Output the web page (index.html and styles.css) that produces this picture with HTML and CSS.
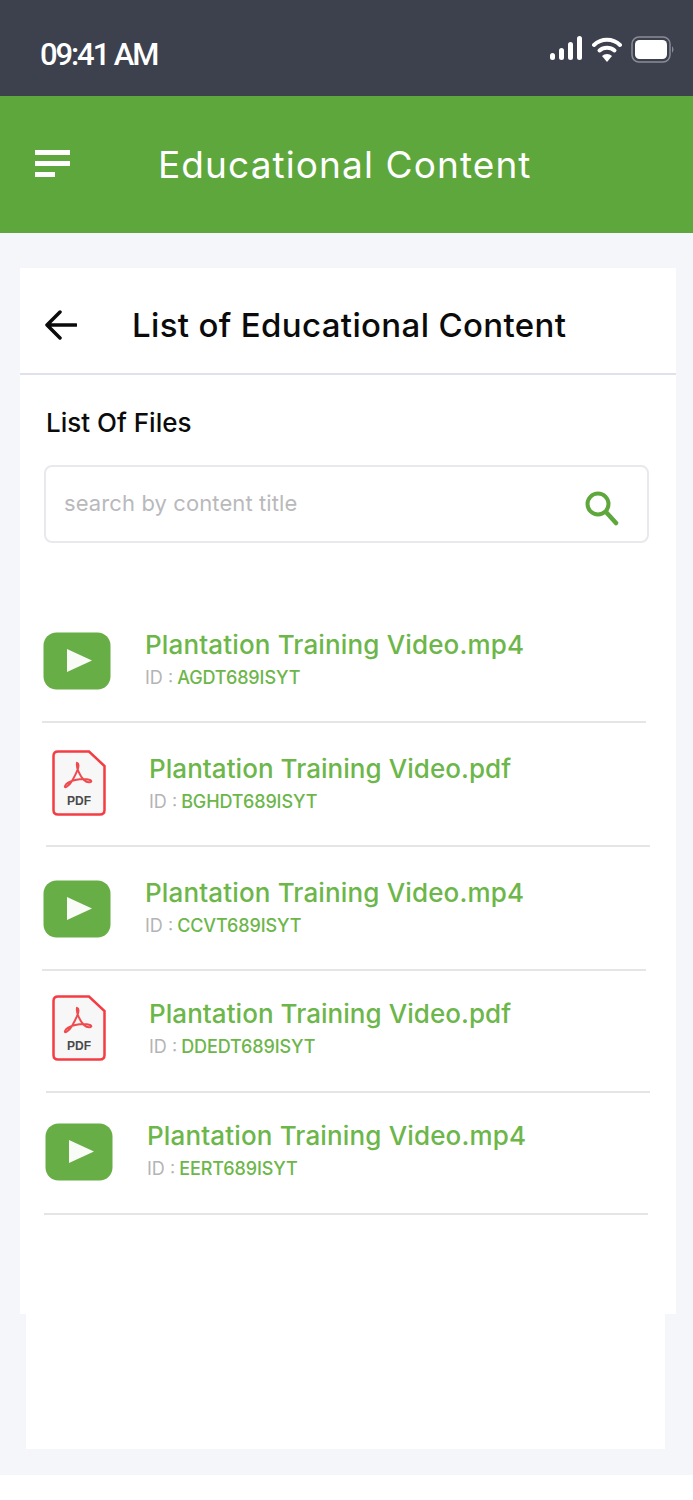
FILE: index.html
```html
<!DOCTYPE html>
<html>
  <head>
    <title>Educational Content</title>
    <link rel="stylesheet" href="styles.css">
  </head>
  <body>
    <div class="page">
      <div class="status-bar">
        <span class="status-time">09:41 AM</span>
        <div class="status-icons">
          <svg width="33" height="24" viewBox="0 0 33 24">
            <rect x="0" y="17" width="5" height="7" rx="2.5" fill="#fff"/>
            <rect x="9" y="12" width="5" height="12" rx="2.5" fill="#fff"/>
            <rect x="18" y="6" width="5" height="18" rx="2.5" fill="#fff"/>
            <rect x="27" y="0" width="5" height="24" rx="2.5" fill="#fff"/>
          </svg>
          <svg width="30" height="27" viewBox="0 0 30 27">
            <path d="M2 9 A19 19 0 0 1 28 9" fill="none" stroke="#fff" stroke-width="4" stroke-linecap="round"/>
            <path d="M7.5 14.5 A11.5 11.5 0 0 1 22.5 14.5" fill="none" stroke="#fff" stroke-width="4" stroke-linecap="round"/>
            <path d="M15 26 L10 20 A7 7 0 0 1 20 20 Z" fill="#fff"/>
          </svg>
          <svg width="45" height="28" viewBox="0 0 45 28">
            <rect x="1" y="1" width="38" height="25" rx="7" fill="none" stroke="#8b8d96" stroke-width="1.5"/>
            <rect x="4" y="4" width="32" height="19" rx="4.5" fill="#fff"/>
            <path d="M41 10 Q44 13.5 41 17 Z" fill="#8b8d96"/>
          </svg>
        </div>
      </div>
      <div class="app-header">
        <div class="menu-icon">
          <span class="menu-line"></span>
          <span class="menu-line"></span>
          <span class="menu-line short"></span>
        </div>
        <h1 class="app-title">Educational Content</h1>
      </div>

      <div class="card">
        <div class="card-head">
          <svg class="back-icon" width="32" height="30" viewBox="0 0 32 30">
            <path d="M31 15 H2 M15 2 L2 15 L15 28" fill="none" stroke="#0b0b0b" stroke-width="3.5" stroke-linecap="round" stroke-linejoin="round"/>
          </svg>
          <h2 class="card-title">List of Educational Content</h2>
        </div>
        <div class="card-body">
          <h3 class="files-title">List Of Files</h3>
          <div class="search-box">
            <span class="search-text">search by content title</span>
            <svg class="search-icon" width="36" height="36" viewBox="0 0 36 36">
              <circle cx="14" cy="14" r="10.5" fill="none" stroke="#5ea73c" stroke-width="4"/>
              <path d="M22 22 L32 33" fill="none" stroke="#5ea73c" stroke-width="4.5" stroke-linecap="round"/>
            </svg>
          </div>
        </div>

        <div class="file-list">
          <div class="file-row row-a tall">
            <svg class="video-icon" width="68" height="58" viewBox="0 0 68 58">
              <rect x="0.5" y="0.5" width="67" height="57" rx="13" fill="#66ae45"/>
              <path d="M24 17 L49 28.500 L24 40 Z" fill="#f8fbf6"/>
            </svg>
            <div class="file-info">
              <div class="file-name">Plantation Training Video.mp4</div>
              <div class="file-id">ID : <span class="id-value">AGDT689ISYT</span></div>
            </div>
          </div>

          <div class="file-row row-b tall">
            <svg class="pdf-icon" width="54" height="66" viewBox="0 0 54 66">
              <path d="M6 1.500 H37 L52.500 16 V60 Q52.500 64.500 48 64.500 H6 Q1.500 64.500 1.500 60 V6 Q1.500 1.500 6 1.500 Z" fill="#f7f7f8" stroke="#f43c42" stroke-width="2.5"/>
              <path d="M25 13 C29 14 24 24 20 31 C17 36 12 39 13 36 C15 31 30 27 38 30 C42 32 36 34 32 30 C28 26 24 18 25 13 Z" fill="none" stroke="#ee4b4f" stroke-width="2"/>
              <text x="27" y="55" class="pdf-label">PDF</text>
            </svg>
            <div class="file-info">
              <div class="file-name">Plantation Training Video.pdf</div>
              <div class="file-id">ID : <span class="id-value">BGHDT689ISYT</span></div>
            </div>
          </div>

          <div class="file-row row-a tall">
            <svg class="video-icon" width="68" height="58" viewBox="0 0 68 58">
              <rect x="0.5" y="0.5" width="67" height="57" rx="13" fill="#66ae45"/>
              <path d="M24 17 L49 28.500 L24 40 Z" fill="#f8fbf6"/>
            </svg>
            <div class="file-info">
              <div class="file-name">Plantation Training Video.mp4</div>
              <div class="file-id">ID : <span class="id-value">CCVT689ISYT</span></div>
            </div>
          </div>

          <div class="file-row row-b">
            <svg class="pdf-icon" width="54" height="66" viewBox="0 0 54 66">
              <path d="M6 1.500 H37 L52.500 16 V60 Q52.500 64.500 48 64.500 H6 Q1.500 64.500 1.500 60 V6 Q1.500 1.500 6 1.500 Z" fill="#f7f7f8" stroke="#f43c42" stroke-width="2.5"/>
              <path d="M25 13 C29 14 24 24 20 31 C17 36 12 39 13 36 C15 31 30 27 38 30 C42 32 36 34 32 30 C28 26 24 18 25 13 Z" fill="none" stroke="#ee4b4f" stroke-width="2"/>
              <text x="27" y="55" class="pdf-label">PDF</text>
            </svg>
            <div class="file-info">
              <div class="file-name">Plantation Training Video.pdf</div>
              <div class="file-id">ID : <span class="id-value">DDEDT689ISYT</span></div>
            </div>
          </div>

          <div class="file-row row-c">
            <svg class="video-icon" width="68" height="58" viewBox="0 0 68 58">
              <rect x="0.5" y="0.5" width="67" height="57" rx="13" fill="#66ae45"/>
              <path d="M24 17 L49 28.500 L24 40 Z" fill="#f8fbf6"/>
            </svg>
            <div class="file-info">
              <div class="file-name">Plantation Training Video.mp4</div>
              <div class="file-id">ID : <span class="id-value">EERT689ISYT</span></div>
            </div>
          </div>
        </div>
      </div>

      <div class="lower-panel"></div>
    </div>
  </body>
</html>
```

FILE: styles.css
```css
* {
  box-sizing: border-box;
}

body {
  margin: 0;
  background-color: #fff;
  font-family: "Inter", "Liberation Sans", sans-serif;
}

h1, h2, h3 {
  margin: 0;
}

.page {
  height: 1475px;
  background-color: #f4f6fa;
}

.status-bar {
  height: 96px;
  padding: 36px 17px 0 40px;
  background-color: #3d404d;
  display: flex;
  justify-content: space-between;
  align-items: flex-start;
}

.status-time {
  padding-top: 1px;
  color: #fff;
  font-family: "Roboto", sans-serif;
  font-size: 31px;
  font-weight: 500;
  letter-spacing: -2.1px;
  line-height: 36px;
}

.status-icons {
  display: flex;
  align-items: flex-start;
  gap: 9px;
}

.app-header {
  height: 137px;
  padding-left: 35px;
  background-color: #5ea73c;
  display: flex;
  align-items: center;
}

.menu-icon {
  width: 35px;
  margin-right: 88px;
  margin-bottom: 2px;
  display: flex;
  flex-direction: column;
  gap: 6px;
}

.menu-line {
  height: 5px;
  background-color: #fff;
}

.menu-line.short {
  width: 20px;
}

.app-title {
  color: #fff;
  font-size: 37px;
  font-weight: 400;
  letter-spacing: 1.1px;
}

.card {
  height: 1046px;
  margin: 35px 17px 0 20px;
  background-color: #fff;
}

.card-head {
  height: 107px;
  padding: 9px 0 0 25px;
  border-bottom: 2px solid #dfe2ec;
  display: flex;
  align-items: center;
}

.back-icon {
  margin-right: 55px;
}

.card-title {
  color: #0b0b0b;
  font-size: 33px;
  font-weight: 500;
  letter-spacing: 0.35px;
}

.card-body {
  padding: 33px 27px 0 24px;
}

.files-title {
  margin-left: 2px;
  color: #0b0b0b;
  font-size: 26px;
  font-weight: 500;
  line-height: 30px;
}

.search-box {
  height: 78px;
  margin-top: 27px;
  padding: 0 27px 2px 18px;
  border: 2px solid #e8e9ed;
  border-radius: 8px;
  display: flex;
  justify-content: space-between;
  align-items: center;
}

.search-text {
  color: #b9b9bc;
  font-size: 22px;
  letter-spacing: 0.1px;
}

.search-icon {
  margin-top: 10px;
}

.file-list {
  margin-top: 56px;
}

.file-row {
  height: 122px;
  width: 604px;
  padding-bottom: 4px;
  border-bottom: 2px solid #e4e5e7;
  display: flex;
  align-items: center;
}

.file-row.tall {
  height: 124px;
  padding-bottom: 0;
}

.row-a {
  margin-left: 22px;
}

.row-b {
  margin-left: 26px;
}

.row-c {
  margin-left: 24px;
}

.video-icon {
  margin-top: 2px;
  margin-left: 1px;
  margin-right: 34px;
}

.pdf-icon {
  margin-bottom: 2px;
  margin-left: 6px;
  margin-right: 43px;
}

.file-info {
  margin-bottom: 2px;
}

.file-name {
  color: #6cb64a;
  font-size: 26px;
  font-weight: 500;
  letter-spacing: 0.15px;
  line-height: 32px;
}

.row-b .file-name {
  letter-spacing: 0.05px;
}

.file-id {
  margin-top: 5px;
  color: #b4b4b6;
  font-size: 18px;
  line-height: 24px;
}

.id-value {
  margin-left: -1px;
  color: #6cb64a;
  font-weight: 500;
  letter-spacing: -0.1px;
}

.pdf-label {
  fill: #4a4a4a;
  font-family: "Liberation Sans", sans-serif;
  font-size: 12px;
  font-weight: 700;
  text-anchor: middle;
}

.lower-panel {
  height: 135px;
  margin: 0 28px 0 26px;
  background-color: #fff;
}
```
